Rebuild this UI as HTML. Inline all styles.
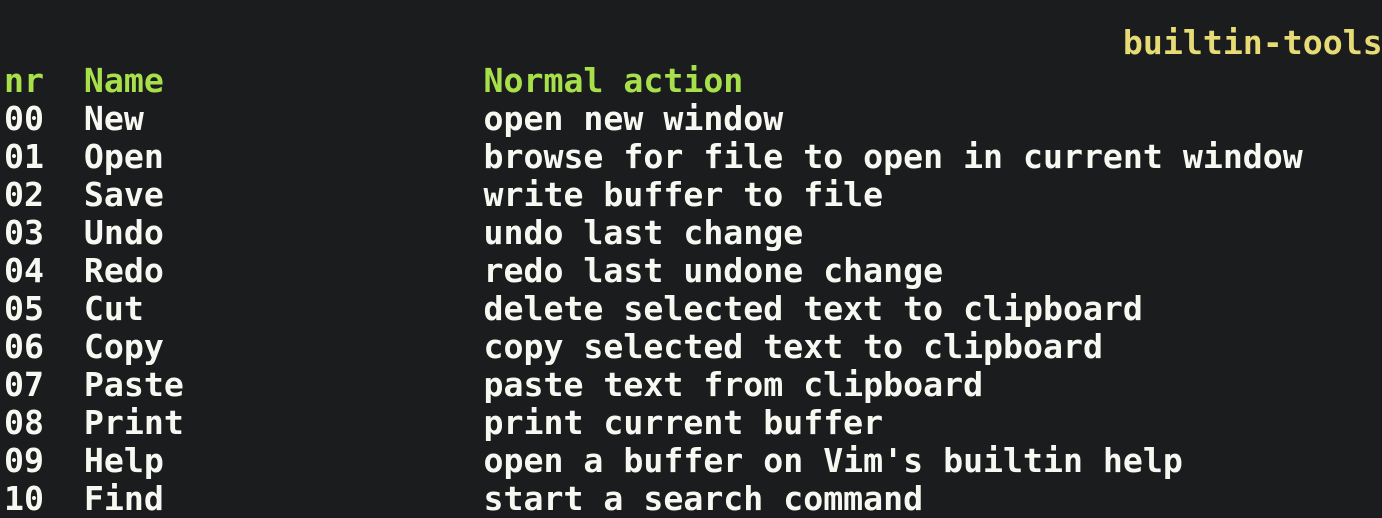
<!DOCTYPE html>
<html><head><meta charset="utf-8"><style>
html,body{margin:0;padding:0;background:#1b1c1e;width:1382px;height:518px;overflow:hidden}
pre{margin:0;position:absolute;left:4px;top:24px;font-family:"DejaVu Sans Mono","Liberation Mono",monospace;font-size:33.2px;font-weight:bold;line-height:38px;color:#f8f8f2;white-space:pre}
.g{color:#a7e04a}.y{color:#e6db74}
</style></head><body><pre><span class="y">                                                        builtin-tools</span>
<span class="g">nr  Name                Normal action</span>
00  New                 open new window
01  Open                browse for file to open in current window
02  Save                write buffer to file
03  Undo                undo last change
04  Redo                redo last undone change
05  Cut                 delete selected text to clipboard
06  Copy                copy selected text to clipboard
07  Paste               paste text from clipboard
08  Print               print current buffer
09  Help                open a buffer on Vim's builtin help
10  Find                start a search command</pre></body></html>
